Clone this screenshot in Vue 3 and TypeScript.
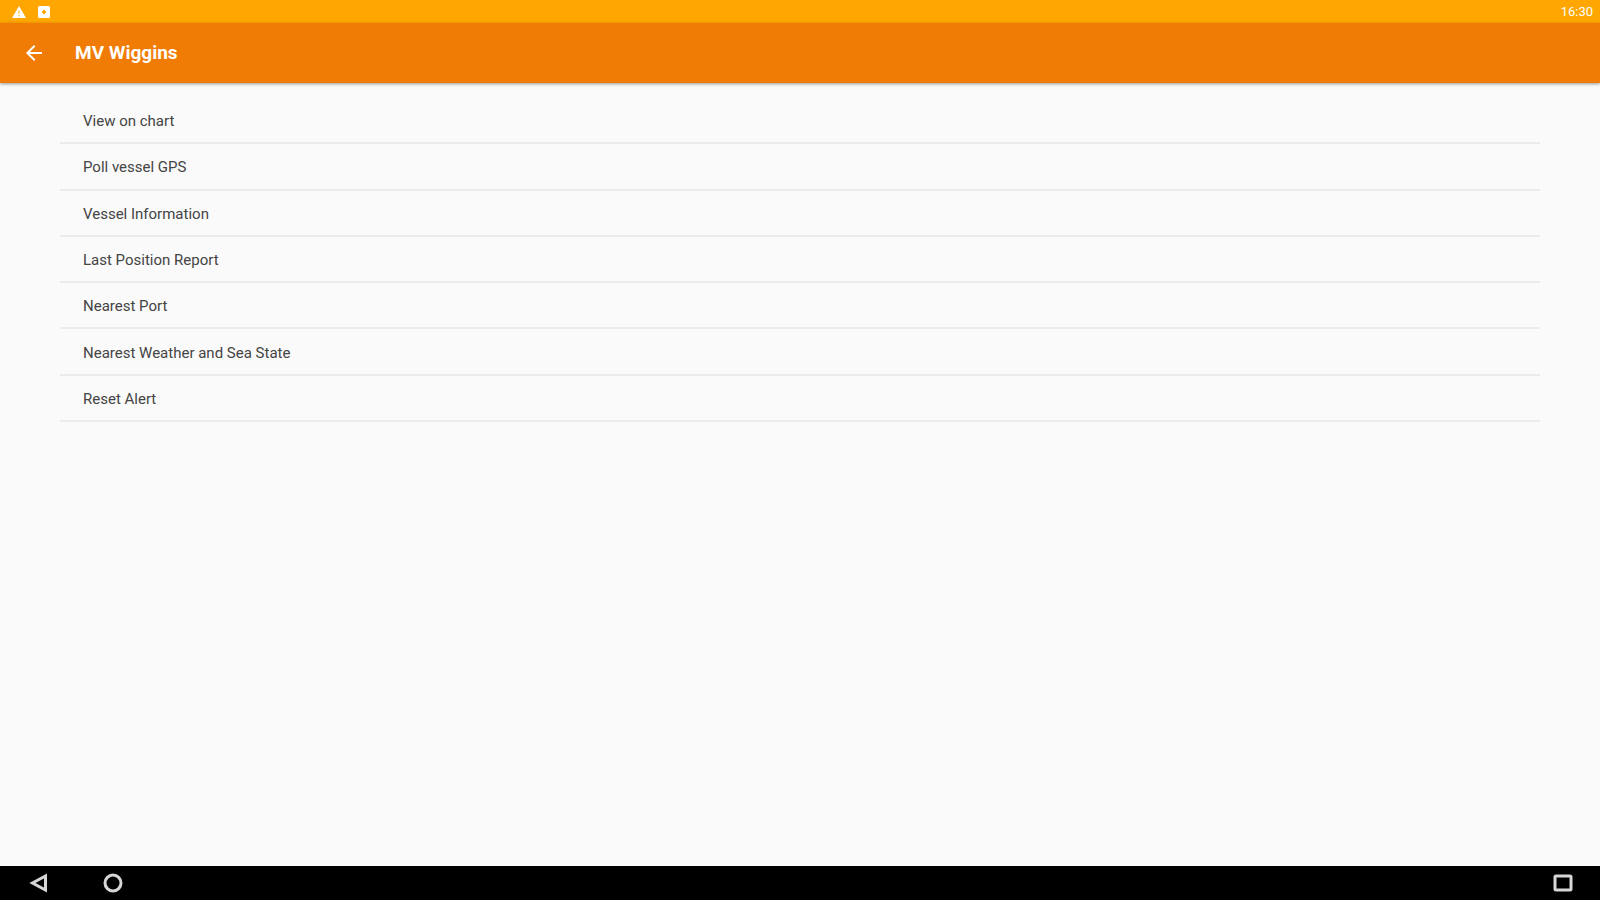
<script setup lang="ts">
const items: string[] = [
  'View on chart',
  'Poll vessel GPS',
  'Vessel Information',
  'Last Position Report',
  'Nearest Port',
  'Nearest Weather and Sea State',
  'Reset Alert',
]
</script>

<template>
  <div class="screen">
    <div class="status">
      <div class="notices">
        <svg width="14" height="12" viewBox="0 0 14 12" aria-hidden="true">
          <path d="M7 0L14 12H0Z" fill="#fff" />
          <path d="M7 4.5v3.4M7 9v1.4" stroke="#ffc04d" stroke-width="1.3" />
        </svg>
        <svg width="12" height="12" viewBox="0 0 12 12" aria-hidden="true">
          <rect width="12" height="12" rx="1.5" fill="#fff" />
          <path d="M6 3.4L8.4 6 6 8.6 3.6 6Z" fill="#ffa600" />
        </svg>
      </div>
      <time class="clock">16:30</time>
    </div>
    <header class="bar">
      <button class="back" type="button" aria-label="Back">
        <svg width="16" height="16" viewBox="0 0 16 16" aria-hidden="true">
          <path d="M16 7H3.8l5.6-5.6L8 0 0 8l8 8 1.4-1.4L3.8 9H16z" fill="#fff" />
        </svg>
      </button>
      <h1>MV Wiggins</h1>
    </header>
    <main>
      <ul class="list">
        <li v-for="item in items" :key="item">
          <button type="button">{{ item }}</button>
        </li>
      </ul>
    </main>
    <nav class="nav" aria-label="System">
      <button type="button" aria-label="Back">
        <svg width="20" height="20" viewBox="0 0 20 20" aria-hidden="true">
          <path d="M17.5 3v14L4.5 10Z" />
        </svg>
      </button>
      <button type="button" aria-label="Home">
        <svg width="20" height="20" viewBox="0 0 20 20" aria-hidden="true">
          <circle cx="10" cy="10" r="8" />
        </svg>
      </button>
      <button class="recent" type="button" aria-label="Recent apps">
        <svg width="20" height="20" viewBox="0 0 20 20" aria-hidden="true">
          <rect x="2" y="3" width="16" height="14" rx="1" />
        </svg>
      </button>
    </nav>
  </div>
</template>

<style>
body {
  margin: 0;
}
</style>

<style scoped>
.screen {
  display: flex;
  flex-direction: column;
  min-height: 100vh;
  background: #fafafa;
  color: #444;
  font-family: Roboto, "Liberation Sans", sans-serif;
}
button {
  display: flex;
  align-items: center;
  padding: 0;
  border: 0;
  background: none;
  color: inherit;
  font: inherit;
  cursor: pointer;
}
.status {
  display: flex;
  align-items: center;
  justify-content: space-between;
  height: 23px;
  padding: 0 7px 0 12px;
  background: #ffa600;
  color: #fff;
}
.notices {
  display: flex;
  gap: 12px;
}
.clock {
  font-size: 13px;
  line-height: 24px;
}
.bar {
  display: flex;
  align-items: center;
  gap: 33px;
  height: 60px;
  padding: 0 26px;
  background: #f07c05;
  box-shadow: 0 1px 3px rgba(0, 0, 0, 0.4);
  color: #fff;
}
h1 {
  margin: 0;
  font-size: 19px;
  font-weight: 700;
  line-height: 24px;
}
main {
  flex: 1;
  padding: 15px 60px;
}
.list {
  display: grid;
  grid-auto-rows: 1fr;
  min-height: 324px;
  margin: 0;
  padding: 0;
  list-style: none;
}
.list li {
  display: flex;
  border-bottom: 2px solid #ebebeb;
}
.list button {
  flex: 1;
  padding: 2px 23px 0;
  font-size: 15px;
  line-height: 20px;
  text-align: left;
}
.nav {
  display: flex;
  align-items: center;
  gap: 55px;
  height: 34px;
  padding: 0 27px 0 28px;
  background: #000;
}
.nav svg {
  fill: none;
  stroke: #d6d6d6;
  stroke-width: 3;
}
.recent {
  margin-left: auto;
}
</style>
